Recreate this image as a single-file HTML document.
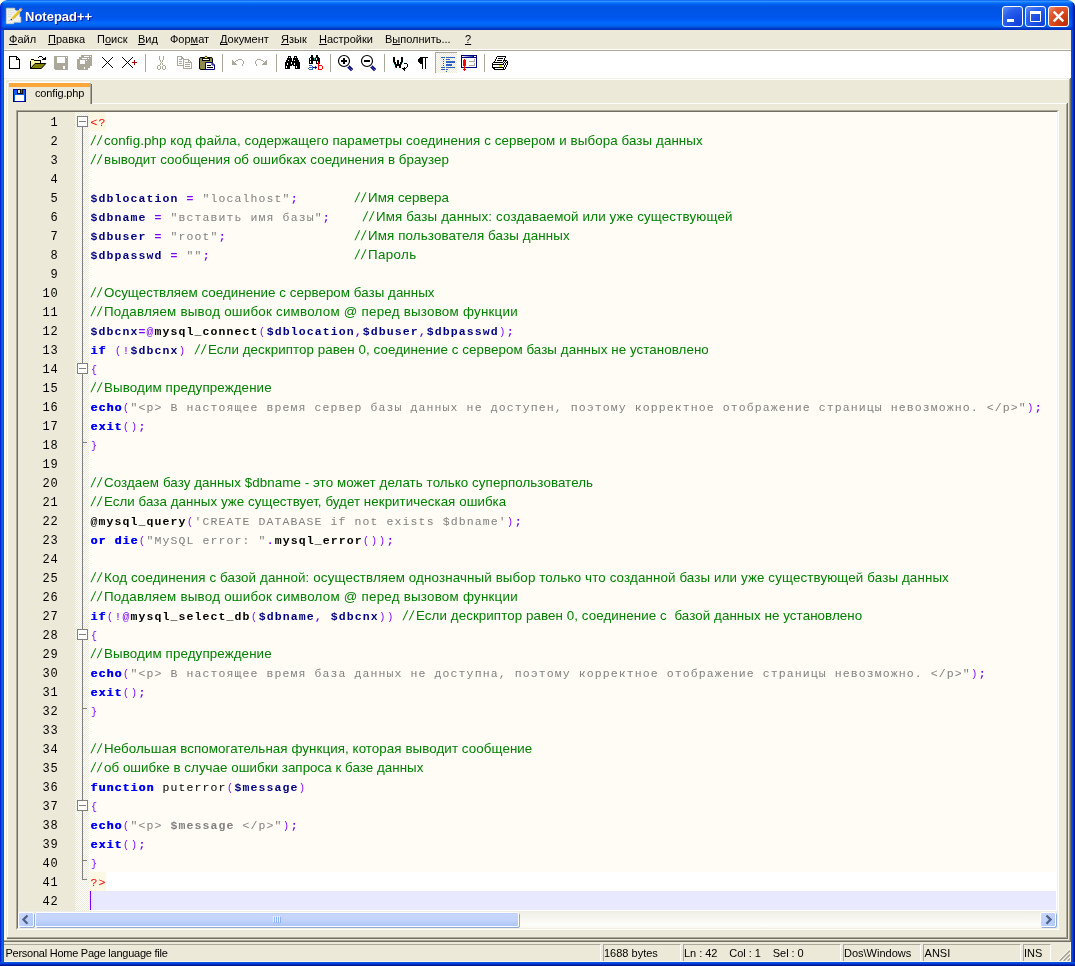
<!DOCTYPE html>
<html><head><meta charset="utf-8"><title>Notepad++</title>
<style>
html,body{margin:0;padding:0}
body{width:1075px;height:966px;overflow:hidden;background:#FFFCEE;font-family:"Liberation Sans",sans-serif}
#win{position:absolute;left:0;top:0;width:1075px;height:966px;background:#ECE9D8;overflow:hidden;border-radius:7px 7px 0 0;will-change:transform}
/* window borders */
#bl{position:absolute;left:0;top:30px;width:4px;height:936px;background:linear-gradient(to right,#0019CF 0,#0831D9 1px,#166AEE 2px,#0855DD 3px,#0855DD 4px)}
#br{position:absolute;left:1071px;top:30px;width:4px;height:936px;background:linear-gradient(to left,#00138C 0,#001EA0 1px,#0831D9 2px,#0855DD 3px,#0855DD 4px)}
#bb{position:absolute;left:0;top:962px;width:1075px;height:4px;background:linear-gradient(to top,#00138C 0,#001EA0 1px,#0831D9 2px,#0855DD 3px,#0855DD 4px)}
/* title */
#title{position:absolute;left:0;top:0;width:1075px;height:30px;border-radius:7px 7px 0 0;
background:linear-gradient(to bottom,#0058EE 0%,#3593FF 4%,#288EFF 6%,#127DFF 8%,#036FFC 10%,#0262EE 14%,#0057E5 20%,#0054E3 24%,#0055EB 56%,#005BF5 66%,#026AFE 76%,#0062EF 86%,#0052D6 91%,#0038C8 95%,#0030B8 100%)}
#title .cap{position:absolute;left:25px;top:9px;font:bold 13px/16px "Liberation Sans",sans-serif;color:#fff;text-shadow:1px 1px #0F1089;white-space:nowrap}
.tbtn{position:absolute;top:6px;width:21px;height:21px;box-sizing:border-box;border:1px solid #fff;border-radius:3px;background:radial-gradient(circle at 85% 90%,#1142DC 0%,#1A4EE3 35%,#2860EC 65%,#6593F8 100%)}
.tbtn.close{background:radial-gradient(circle at 85% 90%,#BE3008 0%,#D64218 42%,#E25C34 74%,#F09A82 100%)}
/* menu */
#menu{position:absolute;left:4px;top:30px;width:1067px;height:19px;background:#ECE9D8;border-bottom:1px solid #fff}
#menu span{position:absolute;top:3px;font:11px/13px "Liberation Sans",sans-serif;color:#000;white-space:nowrap}
#menu u{text-decoration:underline;text-underline-offset:1px;text-decoration-skip-ink:none}
/* toolbar */
#tbline{position:absolute;left:4px;top:50px;width:1067px;height:1px;background:#ACA899}
#toolbar{position:absolute;left:4px;top:51px;width:1067px;height:27px;background:#fff}
#tbline2{position:absolute;left:4px;top:78px;width:1067px;height:1px;background:#F1EFE2}
#toolbar svg{position:absolute;top:4px}
#toolbar .sep{position:absolute;top:3px;width:1px;height:19px;background:#ACA899}
/* tab */
#tab{position:absolute;left:7px;top:81px;width:85px;height:23px}
#tab .hl{position:absolute;left:0;top:2px;width:1px;height:21px;background:#fff}
#tab .ht{position:absolute;left:2px;top:1px;width:81px;height:1px;background:#fff}
#tab .ht0{position:absolute;left:2px;top:0;width:81px;height:1px;background:#F6F5EE}
#tab .hc{position:absolute;left:1px;top:1px;width:1px;height:1px;background:#fff}
#tab .or{position:absolute;left:2px;top:2px;width:81px;height:4px;background:#F9A738}
#tab .re1{position:absolute;left:83px;top:2px;width:1px;height:21px;background:#ACA899}
#tab .re2{position:absolute;left:84px;top:3px;width:1px;height:20px;background:#716F64}
#tab .lbl{position:absolute;left:28px;top:6px;font:11px/13px "Liberation Sans",sans-serif;letter-spacing:-.15px;color:#000;white-space:nowrap}
#tab svg{position:absolute;left:6px;top:8px}
#tabline{position:absolute;left:92px;top:103px;width:974px;height:1px;background:#fff}
/* frame around editor (tab control body) */
#frame{position:absolute;left:0;top:0}
.r{position:absolute;display:block}
/* editor */
#editor{position:absolute;left:16px;top:110px;width:1039px;height:816px;border-style:solid;border-width:2px;border-color:#ACA899 #fff #fff #ACA899;background:#FEFCF5}
#editor:after{content:"";position:absolute;left:0;top:0;right:-1px;bottom:-1px;border-right:1px solid #F1EFE2;border-bottom:1px solid #F1EFE2;pointer-events:none;z-index:5}
#editor:before{content:"";position:absolute;left:-1px;top:-1px;right:0;bottom:0;border-left:1px solid #716F64;border-top:1px solid #716F64;pointer-events:none;z-index:5}
#numm{position:absolute;left:0;top:0;width:57px;height:799px;background:#ECE9D8}
.num{position:absolute;right:16.4px;height:19px;font:12px/19px "Liberation Mono",monospace;letter-spacing:.8px;color:#000;padding-top:2px;box-sizing:border-box}
#foldm{position:absolute;left:57px;top:0;width:14px;height:799px;background-color:#fff;
background-image:conic-gradient(#ECE9D8 25%,#fff 0 50%,#ECE9D8 0 75%,#fff 0);background-size:2px 2px}
#text{position:absolute;left:71px;top:0;width:968px;height:799px;background:#fff;overflow:hidden}
.ln{position:absolute;left:0;width:967px;background:#FEFCF5;height:19px;font:11.5px/19px "Liberation Mono",monospace;letter-spacing:1.1px;white-space:pre;color:#000;padding:1px 0 0 1.55px;box-sizing:border-box}
.l41{background:#fff}
.l42{background:#E8E8FF}
.v{color:#000080;font-weight:bold}
.o{color:#8000FF;font-weight:bold}
.o2{color:#8000FF}
.p{color:#8000FF;font-size:10px;letter-spacing:2px;padding-left:.45px;margin-right:-.45px;position:relative;top:-.5px}
.s{color:#808080}
.sv{color:#808080;font-weight:bold}
.k{color:#0000FF;font-weight:bold;text-shadow:.35px 0 0 #0000FF}
.f{color:#000;font-weight:bold}
.f2{color:#000}
.t{color:#FF0000;background:#FDF8E3;display:inline-block;height:19px;width:17px;margin:-1px 0 0 -1.55px;padding:1px 0 0 1.55px;box-sizing:border-box;vertical-align:top}
.c{position:absolute;top:0px;color:#008000;font:13.333px/19px "Liberation Sans",sans-serif;white-space:pre}
#caret{position:absolute;left:1px;top:779px;width:1px;height:19px;background:#8000FF}
/* scrollbar */
#hscroll{position:absolute;left:0;top:799px;width:1039px;height:17px;background:linear-gradient(to bottom,#EEEDE5 0,#F4F3EC 25%,#FEFEFB 85%,#F8F7F0 100%)}
.sbtn{position:absolute;top:1px;width:16px;height:15px;box-sizing:border-box;border:1px solid #fff;border-radius:2px;background:linear-gradient(135deg,#CAD8FC 0%,#C1D1FB 45%,#AECAF9 100%);box-shadow:1px 1px 0 #8FAAD8}
.sbtn svg{position:absolute;left:-1px;top:-2px}
.sbtn.l{left:0}
.sbtn.r{left:1022px}
#thumb{position:absolute;left:17px;top:1px;width:484px;height:15px;box-sizing:border-box;border:1px solid #fff;border-radius:2px;background:linear-gradient(to bottom,#B8CBF6 0,#C8D6FB 10%,#C3D3FB 55%,#B3CBF9 85%,#B0C4F2 100%);box-shadow:1px 1px 0 #8FAAD8}
#grip{position:absolute;left:237px;top:3px;width:8px;height:7px}
#grip:before{content:"";position:absolute;left:0;top:0;width:7px;height:6px;background:repeating-linear-gradient(to right,#F0F5FE 0,#F0F5FE 1px,transparent 1px,transparent 2px)}
#grip:after{content:"";position:absolute;left:1px;top:1px;width:7px;height:6px;background:repeating-linear-gradient(to right,#8CB0F8 0,#8CB0F8 1px,transparent 1px,transparent 2px)}
/* status */
#stline{display:none}
#status{position:absolute;left:4px;top:942px;width:1067px;height:20px;background:#ECE9D8}
.pn{position:absolute;top:2px;height:18px;box-sizing:border-box;border-left:1px solid #ACA899;border-top:1px solid #ACA899;border-right:1px solid #fff;font:11px/13px "Liberation Sans",sans-serif;color:#000;white-space:pre;padding:2px 0 0 0;overflow:hidden}
.sl{display:inline-block;width:14.5px;transform:translateX(-0.5px) skewX(-12deg);transform-origin:0 100%;letter-spacing:2.6px}
.fv{position:absolute;left:7px;width:1px;background:#808080}
.fb{position:absolute;left:2px;width:11px;height:11px;box-sizing:border-box;border:1px solid #808080;background:#fff}
.fb i{position:absolute;left:1px;top:4px;width:7px;height:1px;background:#808080}
.ft{position:absolute;left:8px;width:4px;height:1px;background:#808080}
#title:before{content:"";position:absolute;left:0;top:3px;width:4px;height:27px;background:linear-gradient(to right,#0019CF 0,#0831D9 1px,rgba(8,49,217,.5) 2px,rgba(8,49,217,0) 4px)}
#title:after{content:"";position:absolute;right:0;top:3px;width:5px;height:27px;background:linear-gradient(to left,#00138C 0,#001EA0 1px,#0831D9 2px,rgba(8,49,217,.5) 3px,rgba(8,49,217,0) 5px)}

</style></head>
<body>
<div id="win">
<div id="title">
<svg style="position:absolute;left:0;top:0" width="30" height="30" viewBox="0 0 30 30">
<path d="M6.300 8.200H14.800V9.800L16.200 10.800H19.600V17H20.800V22.300H13.800V23.700H6.300Z" fill="#F3F2EC" stroke="#D9D3B6" stroke-width=".7"/>
<path d="M8 10.500h5.500M8 12.500h7M8 14.500h4M8 16.500h3M8 20.500h5" stroke="#D6D9DC" stroke-width=".8" fill="none"/>
<path d="M12.300 18.600L20 10.400" stroke="#EEC61C" stroke-width="2.200" stroke-linecap="butt"/>
<path d="M13.300 19.300L20.900 11.200" stroke="#B98F12" stroke-width=".7" opacity=".8"/>
<path d="M19.900 10.500L20.900 9.400" stroke="#F4EFD8" stroke-width="2.700"/>
<path d="M20.800 9.500L21.800 8.400" stroke="#E38D66" stroke-width="2.700"/>
<path d="M10.800 20.200l1.200-2.500l1.700 1.600z" fill="#E9D9A0"/>
<circle cx="11.300" cy="19.500" r=".75" fill="#3C2C14"/>
</svg>
<div class="cap">Notepad++</div>
<div class="tbtn" style="left:1002px"><svg width="19" height="19" viewBox="0 0 19 19"><rect x="4" y="12" width="7" height="3" fill="#fff"/></svg></div>
<div class="tbtn" style="left:1025px"><svg width="19" height="19" viewBox="0 0 19 19"><path d="M4.5 5.5h10v9h-10z M4 5h11" fill="none" stroke="#fff" stroke-width="1"/><rect x="4" y="4" width="11" height="3" fill="#fff"/></svg></div>
<div class="tbtn close" style="left:1048px"><svg width="19" height="19" viewBox="0 0 19 19"><path d="M4.700 4.700 L14.300 14.300 M14.300 4.700 L4.700 14.300" stroke="#fff" stroke-width="2.400" stroke-linecap="butt"/></svg></div>
</div>

<div id="menu">
<span style="left:5px"><u>Ф</u>айл</span>
<span style="left:44px"><u>П</u>равка</span>
<span style="left:93px">П<u>о</u>иск</span>
<span style="left:134px"><u>В</u>ид</span>
<span style="left:166px">Фор<u>м</u>ат</span>
<span style="left:216px"><u>Д</u>окумент</span>
<span style="left:277px"><u>Я</u>зык</span>
<span style="left:315px"><u>Н</u>астройки</span>
<span style="left:381px">В<u>ы</u>полнить...</span>
<span style="left:461px"><u>?</u></span>
</div>

<div id="tbline"></div>
<div id="toolbar">
<svg width="1067" height="26" viewBox="4 51 1067 26" style="position:absolute;left:0;top:0" shape-rendering="crispEdges">
<defs><pattern id="ck" width="2" height="2" patternUnits="userSpaceOnUse"><rect width="2" height="2" fill="#fff"/><rect width="1" height="1" fill="#ECE9D8"/><rect x="1" y="1" width="1" height="1" fill="#ECE9D8"/></pattern><linearGradient id="tg"><stop offset="0" stop-color="#fff"/><stop offset="1" stop-color="#1030A0"/></linearGradient></defs>
<!-- new -->
<path d="M9.5 56.5H16.5L19.5 59.5V68.5H9.5Z" fill="#fff" stroke="#000"/>
<path d="M16.5 56.5V59.5H19.500" fill="none" stroke="#000"/>
<!-- open -->
<path d="M30 60h1v-1h3v1h7v4h-6l-5 5z" fill="#F8F6A0"/>
<path d="M30.500 68.500V60.500M31 59.500h3M34 60.500h6.500v3" fill="none" stroke="#000"/>
<path d="M30.500 68.500l4.500-5h10.800l-4.500 5z" fill="#808000" stroke="#000" stroke-width="1" shape-rendering="auto"/>
<g fill="#000"><rect x="39" y="56" width="3" height="1"/><rect x="38" y="57" width="1" height="1"/><rect x="42" y="57" width="1" height="1"/><rect x="45" y="57" width="1" height="1"/><rect x="43" y="58" width="3" height="1"/><rect x="42" y="59" width="4" height="1"/></g>
<!-- save (disabled) -->
<path d="M54 56h14v14h-13l-1-1z" fill="#ACA899"/>
<rect x="57" y="57" width="8" height="6" fill="#fff"/>
<rect x="66" y="57" width="1" height="1" fill="#fff"/>
<rect x="63" y="66" width="2" height="3" fill="#fff"/>
<!-- save all (disabled) -->
<g fill="#ACA899"><rect x="81" y="55" width="11" height="11"/><rect x="79" y="57" width="11" height="11"/><path d="M77 59h11v11h-10l-1-1z"/></g>
<g fill="#fff"><rect x="84" y="56" width="5" height="1"/><rect x="90" y="56" width="1" height="1"/><rect x="82" y="58" width="5" height="1"/><rect x="88" y="58" width="1" height="1"/><rect x="80" y="60" width="5" height="4"/><rect x="86" y="60" width="1" height="1"/><rect x="84" y="67" width="1" height="2"/></g>
<!-- close -->
<path d="M102 57l11 11M113 57L102 68" stroke="#000" stroke-width="1" shape-rendering="auto" fill="none"/>
<!-- close all -->
<path d="M122 57l11 11M133 57L122 68" stroke="#000" stroke-width="1" shape-rendering="auto" fill="none"/>
<path d="M132 62.5h5M134.5 60v5" stroke="#A00000" stroke-width="1.4" fill="none"/>
<!-- sep -->
<rect x="145" y="54" width="1" height="18" fill="#ACA899"/>
<!-- cut (disabled) -->
<g fill="#ACA899"><rect x="159" y="56" width="1" height="1"/><rect x="163" y="56" width="1" height="1"/><rect x="159" y="57" width="1" height="1"/><rect x="163" y="57" width="1" height="1"/><rect x="159" y="58" width="1" height="1"/><rect x="163" y="58" width="1" height="1"/><rect x="159" y="59" width="1" height="1"/><rect x="163" y="59" width="1" height="1"/><rect x="160" y="60" width="1" height="1"/><rect x="162" y="60" width="1" height="1"/><rect x="160" y="61" width="1" height="1"/><rect x="162" y="61" width="1" height="1"/><rect x="161" y="62" width="1" height="1"/><rect x="160" y="63" width="1" height="1"/><rect x="162" y="63" width="1" height="1"/><rect x="160" y="64" width="1" height="1"/><rect x="162" y="64" width="1" height="1"/><rect x="158" y="65" width="2" height="1"/><rect x="163" y="65" width="2" height="1"/><rect x="157" y="66" width="1" height="1"/><rect x="160" y="66" width="1" height="1"/><rect x="162" y="66" width="1" height="1"/><rect x="165" y="66" width="1" height="1"/><rect x="157" y="67" width="1" height="1"/><rect x="160" y="67" width="1" height="1"/><rect x="162" y="67" width="1" height="1"/><rect x="165" y="67" width="1" height="1"/><rect x="157" y="68" width="1" height="1"/><rect x="160" y="68" width="1" height="1"/><rect x="162" y="68" width="1" height="1"/><rect x="165" y="68" width="1" height="1"/><rect x="158" y="69" width="2" height="1"/><rect x="163" y="69" width="2" height="1"/></g>
<!-- copy (disabled) -->
<g fill="#fff" stroke="#ACA899">
<path d="M177.500 56.500h4l2 2v7h-6z"/>
<path d="M183.500 59.500h5l3 3v6h-8z"/>
</g>
<path d="M179 59.500h3M179 61.500h3M179 63.500h3M185 62.500h3M185 64.500h5M185 66.500h5" stroke="#ACA899" fill="none"/>
<path d="M181.500 56.500v2h2M188.500 59.500v3h3" stroke="#ACA899" fill="none"/>
<!-- paste -->
<rect x="199.500" y="57.500" width="13" height="12" rx="1.500" fill="#8E8B4C" stroke="#000" shape-rendering="auto"/>
<path d="M202.500 60.500V58.500H209.500V60.500Z" fill="#fff" stroke="#000"/>
<path d="M203.500 58.500L205.500 56.300H206.500L208.500 58.500Z" fill="#FFFF00" stroke="#000" stroke-width=".8" shape-rendering="auto"/>
<path d="M205.500 62.500H212L214.500 65V69.500H205.500Z" fill="#fff" stroke="#000080" shape-rendering="auto"/>
<path d="M212 62.500V65H214.500" fill="none" stroke="#000080" shape-rendering="auto"/>
<path d="M207 65.500h4M207 67.500h6" stroke="#000" fill="none"/>
<!-- sep -->
<rect x="222" y="54" width="1" height="18" fill="#ACA899"/>
<!-- undo / redo (disabled) -->
<g fill="#ACA899"><rect x="238" y="59" width="4" height="1"/><rect x="232" y="60" width="1" height="1"/><rect x="236" y="60" width="2" height="1"/><rect x="242" y="60" width="1" height="1"/><rect x="232" y="61" width="2" height="1"/><rect x="235" y="61" width="1" height="1"/><rect x="243" y="61" width="1" height="1"/><rect x="232" y="62" width="3" height="1"/><rect x="243" y="62" width="1" height="1"/><rect x="232" y="63" width="4" height="1"/><rect x="243" y="63" width="1" height="1"/><rect x="232" y="64" width="5" height="1"/><rect x="242" y="64" width="1" height="1"/><rect x="242" y="65" width="1" height="1"/><rect x="257" y="59" width="4" height="1"/><rect x="256" y="60" width="1" height="1"/><rect x="261" y="60" width="2" height="1"/><rect x="266" y="60" width="1" height="1"/><rect x="255" y="61" width="1" height="1"/><rect x="263" y="61" width="1" height="1"/><rect x="265" y="61" width="2" height="1"/><rect x="255" y="62" width="1" height="1"/><rect x="264" y="62" width="3" height="1"/><rect x="255" y="63" width="1" height="1"/><rect x="263" y="63" width="4" height="1"/><rect x="256" y="64" width="1" height="1"/><rect x="262" y="64" width="5" height="1"/><rect x="256" y="65" width="1" height="1"/></g>
<!-- sep -->
<rect x="276" y="54" width="1" height="18" fill="#ACA899"/>
<!-- find (binoculars) -->
<g fill="#000"><rect x="288" y="56" width="3" height="1"/><rect x="294" y="56" width="3" height="1"/><rect x="288" y="57" width="3" height="1"/><rect x="294" y="57" width="3" height="1"/><rect x="287" y="58" width="5" height="1"/><rect x="293" y="58" width="5" height="1"/><rect x="287" y="59" width="5" height="1"/><rect x="293" y="59" width="5" height="1"/><rect x="286" y="60" width="6" height="1"/><rect x="293" y="60" width="6" height="1"/><rect x="286" y="61" width="13" height="1"/><rect x="285" y="62" width="15" height="1"/><rect x="285" y="63" width="15" height="1"/><rect x="285" y="64" width="15" height="1"/><rect x="285" y="65" width="7" height="1"/><rect x="293" y="65" width="7" height="1"/><rect x="285" y="66" width="5" height="1"/><rect x="295" y="66" width="5" height="1"/><rect x="285" y="67" width="5" height="1"/><rect x="295" y="67" width="5" height="1"/><rect x="285" y="68" width="5" height="1"/><rect x="295" y="68" width="5" height="1"/></g><g fill="#fff"><rect x="289" y="57" width="1" height="1"/><rect x="295" y="57" width="1" height="1"/><rect x="288" y="60" width="1" height="1"/><rect x="294" y="60" width="1" height="1"/><rect x="287" y="63" width="1" height="1"/><rect x="287" y="64" width="1" height="1"/><rect x="291" y="62" width="1" height="1"/><rect x="291" y="63" width="1" height="1"/><rect x="294" y="63" width="1" height="1"/><rect x="294" y="64" width="1" height="1"/><rect x="286" y="66" width="1" height="1"/><rect x="286" y="67" width="1" height="1"/><rect x="296" y="66" width="1" height="1"/><rect x="296" y="67" width="1" height="1"/></g>
<!-- replace -->
<g fill="#000"><rect x="311" y="55" width="2" height="1"/><rect x="316" y="55" width="2" height="1"/><rect x="311" y="56" width="2" height="1"/><rect x="316" y="56" width="2" height="1"/><rect x="310" y="57" width="4" height="1"/><rect x="315" y="57" width="4" height="1"/><rect x="309" y="58" width="11" height="1"/><rect x="309" y="59" width="11" height="1"/><rect x="309" y="60" width="11" height="1"/><rect x="309" y="61" width="4" height="1"/><rect x="316" y="61" width="4" height="1"/><rect x="309" y="62" width="4" height="1"/><rect x="316" y="62" width="4" height="1"/><rect x="309" y="63" width="4" height="1"/><rect x="316" y="63" width="4" height="1"/></g><g fill="#fff"><rect x="310" y="58" width="1" height="1"/><rect x="310" y="59" width="1" height="1"/><rect x="316" y="58" width="1" height="1"/><rect x="316" y="59" width="1" height="1"/><rect x="310" y="61" width="1" height="1"/><rect x="310" y="62" width="1" height="1"/><rect x="317" y="61" width="1" height="1"/><rect x="317" y="62" width="1" height="1"/></g><g fill="#1E9A9A"><rect x="313" y="57" width="1" height="1"/><rect x="315" y="57" width="1" height="1"/><rect x="314" y="58" width="1" height="1"/><rect x="314" y="59" width="1" height="1"/></g>
<g fill="#3366CC"><rect x="309" y="65" width="1" height="1"/><rect x="310" y="65" width="1" height="1"/><rect x="311" y="65" width="1" height="1"/><rect x="312" y="66" width="1" height="1"/><rect x="309" y="67" width="1" height="1"/><rect x="310" y="67" width="1" height="1"/><rect x="311" y="67" width="1" height="1"/><rect x="312" y="67" width="1" height="1"/><rect x="308" y="68" width="1" height="1"/><rect x="312" y="68" width="1" height="1"/><rect x="309" y="69" width="1" height="1"/><rect x="310" y="69" width="1" height="1"/><rect x="311" y="69" width="1" height="1"/><rect x="312" y="69" width="1" height="1"/></g><g fill="#FF0000"><rect x="318" y="62" width="1" height="1"/><rect x="318" y="63" width="1" height="1"/><rect x="318" y="64" width="1" height="1"/><rect x="318" y="65" width="1" height="1"/><rect x="319" y="65" width="1" height="1"/><rect x="320" y="65" width="1" height="1"/><rect x="321" y="65" width="1" height="1"/><rect x="318" y="66" width="1" height="1"/><rect x="322" y="66" width="1" height="1"/><rect x="318" y="67" width="1" height="1"/><rect x="322" y="67" width="1" height="1"/><rect x="318" y="68" width="1" height="1"/><rect x="322" y="68" width="1" height="1"/><rect x="318" y="69" width="1" height="1"/><rect x="319" y="69" width="1" height="1"/><rect x="320" y="69" width="1" height="1"/><rect x="321" y="69" width="1" height="1"/></g><path d="M313 67.500h3" stroke="#000080" fill="none"/><path d="M315 65.700l2.300 1.800l-2.300 1.800z" fill="#000080" shape-rendering="auto"/>
<!-- sep -->
<rect x="330" y="54" width="1" height="18" fill="#ACA899"/>
<!-- zoom in -->
<g shape-rendering="auto">
<path d="M348.3 66.300l3.800 3.800" stroke="#000080" stroke-width="3.200" stroke-linecap="butt"/>
<path d="M348.0 66.200l3.600 3.600" stroke="#fff" stroke-width="0.800" stroke-dasharray="1 1"/>
<circle cx="344" cy="61" r="5.500" fill="#fff" stroke="#000" stroke-width="1.150"/>
<rect x="341" y="60" width="6" height="2" fill="#000" shape-rendering="crispEdges"/>
<rect x="343" y="58" width="2" height="6" fill="#000" shape-rendering="crispEdges"/>
</g>
<!-- zoom out -->
<g shape-rendering="auto">
<path d="M371.3 66.300l3.800 3.800" stroke="#000080" stroke-width="3.200" stroke-linecap="butt"/>
<path d="M371.0 66.200l3.600 3.600" stroke="#fff" stroke-width="0.800" stroke-dasharray="1 1"/>
<circle cx="367" cy="61" r="5.500" fill="#fff" stroke="#000" stroke-width="1.150"/>
<rect x="364" y="60" width="6" height="2" fill="#000" shape-rendering="crispEdges"/>
</g>
<!-- sep -->
<rect x="384" y="54" width="1" height="18" fill="#ACA899"/>
<!-- wrap -->
<g fill="#000"><rect x="393" y="57" width="2" height="1"/><rect x="401" y="57" width="2" height="1"/><rect x="393" y="58" width="2" height="1"/><rect x="401" y="58" width="2" height="1"/><rect x="393" y="59" width="2" height="1"/><rect x="401" y="59" width="2" height="1"/><rect x="393" y="60" width="2" height="1"/><rect x="397" y="60" width="2" height="1"/><rect x="401" y="60" width="2" height="1"/><rect x="393" y="61" width="2" height="1"/><rect x="397" y="61" width="2" height="1"/><rect x="401" y="61" width="2" height="1"/><rect x="394" y="62" width="2" height="1"/><rect x="397" y="62" width="2" height="1"/><rect x="400" y="62" width="2" height="1"/><rect x="394" y="63" width="2" height="1"/><rect x="397" y="63" width="2" height="1"/><rect x="400" y="63" width="2" height="1"/><rect x="394" y="64" width="8" height="1"/><rect x="395" y="65" width="6" height="1"/><rect x="395" y="66" width="2" height="1"/><rect x="399" y="66" width="2" height="1"/><rect x="395" y="67" width="2" height="1"/><rect x="399" y="67" width="2" height="1"/></g>
<g fill="#2AA"><rect x="393" y="62" width="1" height="1"/><rect x="402" y="62" width="1" height="1"/><rect x="394" y="64" width="1" height="1"/><rect x="401" y="64" width="1" height="1"/><rect x="395" y="67" width="1" height="1"/></g><g fill="#000"><rect x="404" y="63" width="1" height="1"/><rect x="405" y="63" width="1" height="1"/><rect x="406" y="63" width="1" height="1"/><rect x="407" y="64" width="1" height="1"/><rect x="407" y="65" width="1" height="1"/><rect x="407" y="66" width="1" height="1"/><rect x="406" y="67" width="1" height="1"/><rect x="404" y="67" width="1" height="1"/><rect x="402" y="68" width="1" height="1"/><rect x="403" y="68" width="1" height="1"/><rect x="404" y="68" width="1" height="1"/><rect x="405" y="68" width="1" height="1"/><rect x="404" y="69" width="1" height="1"/><rect x="403" y="69" width="1" height="1"/><rect x="404" y="70" width="1" height="1"/></g>
<!-- pilcrow -->
<g fill="#000"><rect x="420" y="57" width="8" height="1"/><rect x="419" y="58" width="4" height="1"/><rect x="425" y="58" width="1" height="1"/><rect x="418" y="59" width="5" height="1"/><rect x="425" y="59" width="1" height="1"/><rect x="418" y="60" width="5" height="1"/><rect x="425" y="60" width="1" height="1"/><rect x="418" y="61" width="5" height="1"/><rect x="425" y="61" width="1" height="1"/><rect x="419" y="62" width="4" height="1"/><rect x="425" y="62" width="1" height="1"/><rect x="420" y="63" width="3" height="1"/><rect x="425" y="63" width="1" height="1"/><rect x="422" y="64" width="1" height="1"/><rect x="425" y="64" width="1" height="1"/><rect x="422" y="65" width="1" height="1"/><rect x="425" y="65" width="1" height="1"/><rect x="422" y="66" width="1" height="1"/><rect x="425" y="66" width="1" height="1"/><rect x="422" y="67" width="1" height="1"/><rect x="425" y="67" width="1" height="1"/><rect x="422" y="68" width="1" height="1"/><rect x="425" y="68" width="1" height="1"/></g>
<!-- indent guide (pressed) -->
<rect x="436" y="53" width="21" height="20" fill="url(#ck)"/>
<rect x="435" y="52" width="22" height="1" fill="#ACA899"/><rect x="435" y="52" width="1" height="21" fill="#ACA899"/>

<g fill="#2F62C4">
<rect x="441" y="57" width="4" height="1"/><rect x="446" y="57" width="9" height="1"/>
<rect x="446" y="59" width="4" height="1"/>
<rect x="446" y="61" width="9" height="2"/>
<rect x="446" y="64" width="6" height="2"/>
<rect x="441" y="67" width="4" height="1"/><rect x="446" y="67" width="9" height="1"/>
<rect x="441" y="69" width="4" height="1"/><rect x="446" y="69" width="2" height="1"/>
<rect x="446" y="71" width="1" height="1"/>
</g>
<g fill="#FF0000"><rect x="443" y="59" width="1" height="1"/><rect x="443" y="61" width="1" height="1"/><rect x="443" y="63" width="1" height="1"/><rect x="443" y="65" width="1" height="1"/></g>
<!-- user dialog -->
<rect x="461.500" y="55.500" width="15" height="12" fill="#fff" stroke="#000080"/>
<rect x="461" y="55" width="16" height="3" fill="#000080"/>
<rect x="462" y="56" width="11" height="1" fill="url(#tg)"/>
<rect x="474" y="56" width="2" height="1" fill="#fff"/>
<path d="M469 61.500h5.500v-2.500M469 65.500h5.500v-2.500" fill="none" stroke="#ACA899"/>
<g fill="#FF0000"><rect x="463" y="60" width="3" height="6"/><rect x="464" y="59" width="1" height="12"/><rect x="463" y="69" width="3" height="1"/></g>
<!-- sep -->
<rect x="484" y="54" width="1" height="18" fill="#ACA899"/>
<!-- print -->
<g fill="#000"><rect x="497" y="56" width="9" height="1"/><rect x="496" y="57" width="1" height="1"/><rect x="505" y="57" width="1" height="1"/><rect x="496" y="58" width="1" height="1"/><rect x="498" y="58" width="5" height="1"/><rect x="504" y="58" width="1" height="1"/><rect x="495" y="59" width="1" height="1"/><rect x="504" y="59" width="1" height="1"/><rect x="495" y="60" width="1" height="1"/><rect x="497" y="60" width="5" height="1"/><rect x="503" y="60" width="4" height="1"/><rect x="494" y="61" width="1" height="1"/><rect x="503" y="61" width="1" height="1"/><rect x="505" y="61" width="1" height="1"/><rect x="507" y="61" width="1" height="1"/><rect x="493" y="62" width="10" height="1"/><rect x="504" y="62" width="1" height="1"/><rect x="506" y="62" width="2" height="1"/><rect x="492" y="63" width="1" height="1"/><rect x="503" y="63" width="1" height="1"/><rect x="505" y="63" width="1" height="1"/><rect x="507" y="63" width="1" height="1"/><rect x="492" y="64" width="12" height="1"/><rect x="505" y="64" width="1" height="1"/><rect x="507" y="64" width="1" height="1"/><rect x="492" y="65" width="1" height="1"/><rect x="504" y="65" width="1" height="1"/><rect x="506" y="65" width="1" height="1"/><rect x="492" y="66" width="1" height="1"/><rect x="504" y="66" width="1" height="1"/><rect x="506" y="66" width="1" height="1"/><rect x="492" y="67" width="12" height="1"/><rect x="505" y="67" width="1" height="1"/><rect x="493" y="68" width="2" height="1"/><rect x="503" y="68" width="1" height="1"/><rect x="505" y="68" width="1" height="1"/><rect x="494" y="69" width="11" height="1"/></g><g fill="#F0E800"><rect x="499" y="65" width="3" height="1"/><rect x="499" y="66" width="3" height="1"/></g>
</svg>
</div>
<div id="tbline2"></div>

<div id="tabline"></div>
<div id="tab"><div class="ht0"></div><div class="ht"></div><div class="hc"></div><div class="hl"></div><div class="or"></div><div class="re1"></div><div class="re2"></div>
<svg width="13" height="13" viewBox="0 0 13 13" shape-rendering="crispEdges"><rect x="0" y="0" width="13" height="13" fill="#0000B0"/><rect x="1" y="1" width="11" height="11" fill="#0A5CF5"/><rect x="4" y="0" width="6" height="5" fill="#101010"/><rect x="5" y="1" width="2" height="3" fill="#E8E4D8"/><rect x="8" y="0" width="1" height="4" fill="#1C6CFF"/><rect x="2" y="6" width="9" height="6" fill="#FFFDF5"/><rect x="0" y="12" width="2" height="1" fill="#000030"/><rect x="11" y="12" width="2" height="1" fill="#000030"/></svg>
<div class="lbl">config.php</div>
</div>

<div id="frame"><i class="r" style="left:5px;top:79px;width:1064px;height:1px;background:#fff"></i><i class="r" style="left:4px;top:79px;width:1px;height:863px;background:#F8F5E8"></i><i class="r" style="left:5px;top:79px;width:1px;height:861px;background:#fff"></i><i class="r" style="left:1069px;top:79px;width:1px;height:862px;background:#ACA899"></i><i class="r" style="left:1070px;top:78px;width:1px;height:864px;background:#716F64"></i><i class="r" style="left:4px;top:940px;width:1066px;height:1px;background:#ACA899"></i><i class="r" style="left:4px;top:941px;width:1067px;height:1px;background:#716F64"></i><i class="r" style="left:4px;top:942px;width:1067px;height:1px;background:#F6F3E2"></i><i class="r" style="left:7px;top:83px;width:1px;height:854px;background:#fff"></i><i class="r" style="left:1066px;top:104px;width:1px;height:834px;background:#ACA899"></i><i class="r" style="left:1067px;top:103px;width:1px;height:836px;background:#716F64"></i><i class="r" style="left:7px;top:937px;width:1060px;height:1px;background:#ACA899"></i><i class="r" style="left:7px;top:938px;width:1061px;height:1px;background:#716F64"></i></div>
<div id="editor">
<div id="numm">
<div class="num" style="top:0px">1</div>
<div class="num" style="top:19px">2</div>
<div class="num" style="top:38px">3</div>
<div class="num" style="top:57px">4</div>
<div class="num" style="top:76px">5</div>
<div class="num" style="top:95px">6</div>
<div class="num" style="top:114px">7</div>
<div class="num" style="top:133px">8</div>
<div class="num" style="top:152px">9</div>
<div class="num" style="top:171px">10</div>
<div class="num" style="top:190px">11</div>
<div class="num" style="top:209px">12</div>
<div class="num" style="top:228px">13</div>
<div class="num" style="top:247px">14</div>
<div class="num" style="top:266px">15</div>
<div class="num" style="top:285px">16</div>
<div class="num" style="top:304px">17</div>
<div class="num" style="top:323px">18</div>
<div class="num" style="top:342px">19</div>
<div class="num" style="top:361px">20</div>
<div class="num" style="top:380px">21</div>
<div class="num" style="top:399px">22</div>
<div class="num" style="top:418px">23</div>
<div class="num" style="top:437px">24</div>
<div class="num" style="top:456px">25</div>
<div class="num" style="top:475px">26</div>
<div class="num" style="top:494px">27</div>
<div class="num" style="top:513px">28</div>
<div class="num" style="top:532px">29</div>
<div class="num" style="top:551px">30</div>
<div class="num" style="top:570px">31</div>
<div class="num" style="top:589px">32</div>
<div class="num" style="top:608px">33</div>
<div class="num" style="top:627px">34</div>
<div class="num" style="top:646px">35</div>
<div class="num" style="top:665px">36</div>
<div class="num" style="top:684px">37</div>
<div class="num" style="top:703px">38</div>
<div class="num" style="top:722px">39</div>
<div class="num" style="top:741px">40</div>
<div class="num" style="top:760px">41</div>
<div class="num" style="top:779px">42</div>
</div>
<div id="foldm"><div class="fv" style="top:15px;height:753px"></div>
<div class="fb" style="top:4px"><i></i></div>
<div class="fb" style="top:251px"><i></i></div>
<div class="fb" style="top:517px"><i></i></div>
<div class="fb" style="top:688px"><i></i></div>
<div class="ft" style="top:330px"></div>
<div class="ft" style="top:596px"></div>
<div class="ft" style="top:748px"></div>
<div class="ft" style="top:767px"></div>
</div>
<div id="text">
<div class="ln" style="top:0px"><span class="t">&lt;?</span></div>
<div class="ln" style="top:19px"><span class="c" id="c2" style="left:0.5px;letter-spacing:0.104px"><span class="sl">//</span>config.php код файла, содержащего параметры соединения с сервером и выбора базы данных</span></div>
<div class="ln" style="top:38px"><span class="c" id="c3" style="left:0.5px;letter-spacing:0.052px"><span class="sl">//</span>выводит сообщения об ошибках соединения в браузер</span></div>
<div class="ln" style="top:57px"></div>
<div class="ln" style="top:76px"><span class="v">$dblocation</span> <span class="o">=</span> <span class="s">"localhost"</span><span class="o">;</span>       <span class="c" id="c5" style="left:264.5px;letter-spacing:0.057px"><span class="sl">//</span>Имя сервера</span></div>
<div class="ln" style="top:95px"><span class="v">$dbname</span> <span class="o">=</span> <span class="s">"вставить имя базы"</span><span class="o">;</span>    <span class="c" id="c6" style="left:272.5px;letter-spacing:0.166px"><span class="sl">//</span>Имя базы данных: создаваемой или уже существующей</span></div>
<div class="ln" style="top:114px"><span class="v">$dbuser</span> <span class="o">=</span> <span class="s">"root"</span><span class="o">;</span>                <span class="c" id="c7" style="left:264.5px;letter-spacing:0.137px"><span class="sl">//</span>Имя пользователя базы данных</span></div>
<div class="ln" style="top:133px"><span class="v">$dbpasswd</span> <span class="o">=</span> <span class="s">""</span><span class="o">;</span>                  <span class="c" id="c8" style="left:264.5px;letter-spacing:0.370px"><span class="sl">//</span>Пароль</span></div>
<div class="ln" style="top:152px"></div>
<div class="ln" style="top:171px"><span class="c" id="c10" style="left:0.5px;letter-spacing:0.055px"><span class="sl">//</span>Осуществляем соединение с сервером базы данных</span></div>
<div class="ln" style="top:190px"><span class="c" id="c11" style="left:0.5px;letter-spacing:0.250px"><span class="sl">//</span>Подавляем вывод ошибок символом @ перед вызовом функции</span></div>
<div class="ln" style="top:209px"><span class="v">$dbcnx</span><span class="o">=</span><span class="o2">@</span><span class="f">mysql_connect</span><span class="p">(</span><span class="v">$dblocation</span><span class="o">,</span><span class="v">$dbuser</span><span class="o">,</span><span class="v">$dbpasswd</span><span class="p">)</span><span class="o">;</span></div>
<div class="ln" style="top:228px"><span class="k">if</span> <span class="p">(</span><span class="o2">!</span><span class="v">$dbcnx</span><span class="p">)</span> <span class="c" id="c13" style="left:104.5px;letter-spacing:0.078px"><span class="sl">//</span>Если дескриптор равен 0, соединение с сервером базы данных не установлено</span></div>
<div class="ln" style="top:247px"><span class="p">{</span></div>
<div class="ln" style="top:266px"><span class="c" id="c15" style="left:0.5px;letter-spacing:0.123px"><span class="sl">//</span>Выводим предупреждение</span></div>
<div class="ln" style="top:285px"><span class="k">echo</span><span class="p">(</span><span class="s">"&lt;p&gt; В настоящее время сервер базы данных не доступен, поэтому корректное отображение страницы невозможно. &lt;/p&gt;"</span><span class="p">)</span><span class="o">;</span></div>
<div class="ln" style="top:304px"><span class="k">exit</span><span class="p">()</span><span class="o">;</span></div>
<div class="ln" style="top:323px"><span class="p">}</span></div>
<div class="ln" style="top:342px"></div>
<div class="ln" style="top:361px"><span class="c" id="c20" style="left:0.5px;letter-spacing:0.088px"><span class="sl">//</span>Создаем базу данных $dbname - это может делать только суперпользователь</span></div>
<div class="ln" style="top:380px"><span class="c" id="c21" style="left:0.5px;letter-spacing:0.058px"><span class="sl">//</span>Если база данных уже существует, будет некритическая ошибка</span></div>
<div class="ln" style="top:399px"><span class="f">@</span><span class="f">mysql_query</span><span class="p">(</span><span class="s">'CREATE DATABASE if not exists $dbname'</span><span class="p">)</span><span class="o">;</span></div>
<div class="ln" style="top:418px"><span class="k">or</span> <span class="k">die</span><span class="p">(</span><span class="s">"MySQL error: "</span><span class="o">.</span><span class="f">mysql_error</span><span class="p">())</span><span class="o">;</span></div>
<div class="ln" style="top:437px"></div>
<div class="ln" style="top:456px"><span class="c" id="c25" style="left:0.5px;letter-spacing:0.136px"><span class="sl">//</span>Код соединения с базой данной: осуществляем однозначный выбор только что созданной базы или уже существующей базы данных</span></div>
<div class="ln" style="top:475px"><span class="c" id="c26" style="left:0.5px;letter-spacing:0.250px"><span class="sl">//</span>Подавляем вывод ошибок символом @ перед вызовом функции</span></div>
<div class="ln" style="top:494px"><span class="k">if</span><span class="p">(</span><span class="o2">!@</span><span class="f">mysql_select_db</span><span class="p">(</span><span class="v">$dbname</span><span class="o">,</span> <span class="v">$dbcnx</span><span class="p">))</span> <span class="c" id="c27" style="left:312.5px;letter-spacing:0.088px"><span class="sl">//</span>Если дескриптор равен 0, соединение с  базой данных не установлено</span></div>
<div class="ln" style="top:513px"><span class="p">{</span></div>
<div class="ln" style="top:532px"><span class="c" id="c29" style="left:0.5px;letter-spacing:0.123px"><span class="sl">//</span>Выводим предупреждение</span></div>
<div class="ln" style="top:551px"><span class="k">echo</span><span class="p">(</span><span class="s">"&lt;p&gt; В настоящее время база данных не доступна, поэтому корректное отображение страницы невозможно. &lt;/p&gt;"</span><span class="p">)</span><span class="o">;</span></div>
<div class="ln" style="top:570px"><span class="k">exit</span><span class="p">()</span><span class="o">;</span></div>
<div class="ln" style="top:589px"><span class="p">}</span></div>
<div class="ln" style="top:608px"></div>
<div class="ln" style="top:627px"><span class="c" id="c34" style="left:0.5px;letter-spacing:0.085px"><span class="sl">//</span>Небольшая вспомогательная функция, которая выводит сообщение</span></div>
<div class="ln" style="top:646px"><span class="c" id="c35" style="left:0.5px;letter-spacing:0.046px"><span class="sl">//</span>об ошибке в случае ошибки запроса к базе данных</span></div>
<div class="ln" style="top:665px"><span class="k">function</span> <span class="f2">puterror</span><span class="p">(</span><span class="v">$message</span><span class="p">)</span></div>
<div class="ln" style="top:684px"><span class="p">{</span></div>
<div class="ln" style="top:703px"><span class="k">echo</span><span class="p">(</span><span class="s">"&lt;p&gt; </span><span class="sv">$message</span><span class="s"> &lt;/p&gt;"</span><span class="p">)</span><span class="o">;</span></div>
<div class="ln" style="top:722px"><span class="k">exit</span><span class="p">()</span><span class="o">;</span></div>
<div class="ln" style="top:741px"><span class="p">}</span></div>
<div class="ln l41" style="top:760px"><span class="t">?&gt;</span></div>
<div class="ln l42" style="top:779px"></div>
<div id="caret"></div>
</div>
<div id="hscroll"><div class="sbtn l"><svg width="17" height="17" viewBox="0 0 17 17"><path d="M9.5 4.5 L5.4 8.6 L9.5 12.7" fill="none" stroke="#4D6185" stroke-width="2.2"/></svg></div><div id="thumb"><div id="grip"></div></div><div class="sbtn r"><svg width="17" height="17" viewBox="0 0 17 17"><path d="M6.5 4.500 L10.600 8.600 L6.500 12.700" fill="none" stroke="#4D6185" stroke-width="2.200"/></svg></div></div>
</div>
<div id="stline"></div>
<div id="status">
<div class="pn" style="left:0;width:597px;border-left:none;padding-left:1.5px;letter-spacing:-.25px">Personal Home Page language file</div>
<div class="pn" style="left:599px;width:78px">1688 bytes</div>
<div class="pn" style="left:679px;width:158px;letter-spacing:-.05px">Ln : 42    Col : 1    Sel : 0</div>
<div class="pn" style="left:839px;width:78px">Dos\Windows</div>
<div class="pn" style="left:919px;width:98px;padding-left:.6px">ANSI</div>
<div class="pn" style="left:1019px;width:28px">INS</div>
<svg style="position:absolute;left:1051px;top:6px" width="16" height="14" viewBox="1055 948 16 14" shape-rendering="auto"><g fill="none" stroke-linecap="butt"><path d="M1058.300 961L1070 949.300M1062.300 961L1070 953.300M1066.300 961L1070 957.300" stroke="#fff" stroke-width="1.100"/><path d="M1059.600 961L1070 950.600M1063.600 961L1070 954.600M1067.600 961L1070 958.600" stroke="#A5A192" stroke-width="1.500"/></g></svg>
<i class="r" style="left:0;top:19px;width:1067px;height:1px;background:#FAF7E8"></i><i class="r" style="left:1066px;top:0;width:1px;height:20px;background:#FAF7E8"></i>
</div>

<div id="bl"></div><div id="br"></div><div id="bb"></div>
</div>
</body></html>
